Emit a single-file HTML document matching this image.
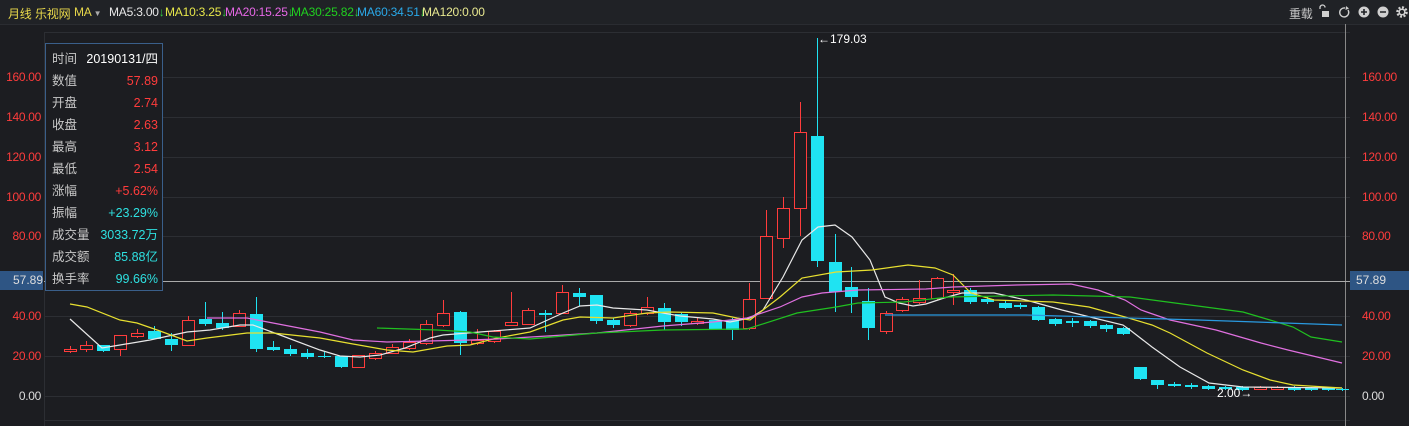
<!DOCTYPE html>
<html><head><meta charset="utf-8"><style>
body{margin:0;width:1409px;height:426px;background:#1c1d21;overflow:hidden;position:relative;font-family:"Liberation Sans","Noto Sans CJK SC",sans-serif;font-size:12px}
.top{position:absolute;left:0;top:0;width:1409px;height:24px;background:#202226;border-bottom:1px solid #2a2c31}
.top span{position:absolute;top:5px;font-size:12px;white-space:nowrap;letter-spacing:-0.2px}
.top b{font-weight:normal;color:#2ecc40}
.ax{position:absolute;color:#ff3c3c;font-size:12px;width:41px;text-align:right;letter-spacing:-0.3px}
.ar{position:absolute;color:#ff3c3c;font-size:12px;left:1362px;letter-spacing:-0.3px}
.tip{position:absolute;left:45px;top:43px;width:116px;height:246px;border:1px solid #3a5f8a;background:#1c1d21}
.tip div{position:absolute;left:0;width:112px;height:22px;line-height:22px;font-size:12.5px}
.tip b{font-weight:normal;position:absolute;left:6px;top:0;color:#c8c8c8}
.tip i{font-style:normal;position:absolute;right:0;top:0}
</style></head><body>
<div class="top">
<span style="left:8px;color:#e8d84a">月线</span>
<span style="left:35px;color:#e8d84a">乐视网</span>
<span style="left:74px;color:#e8d84a">MA<small style="font-size:8px;color:#aaa"> ▼</small></span>
<span style="left:109px;color:#e8e8e8">MA5:3.00<b>↓</b></span>
<span style="left:165px;color:#e8e84a">MA10:3.25<b>↓</b></span>
<span style="left:225px;color:#e868e8">MA20:15.25<b>↓</b></span>
<span style="left:291px;color:#20d020">MA30:25.82<b>↓</b></span>
<span style="left:357px;color:#2aa8e8">MA60:34.51<b>↓</b></span>
<span style="left:422px;color:#e8e890">MA120:0.00</span>
<span style="left:1289px;color:#c8c8c8">重载</span>
<svg style="position:absolute;left:1318px;top:4px" width="91" height="16">
<g fill="#d0d0d0" stroke="#d0d0d0">
<path d="M2 5 V3.5 a2.5 2.5 0 0 1 5 0" fill="none" stroke-width="1.3"/>
<rect x="4" y="7" width="7" height="6" stroke="none"/>
<path d="M27 4 a4.5 4.5 0 1 0 3 2" fill="none" stroke-width="1.4"/>
<path d="M28 2 l3 2.5 l-3.5 1.5z" stroke="none"/>
<circle cx="46" cy="8" r="5.5" stroke="none"/>
<circle cx="65" cy="8" r="5.5" stroke="none"/>
<circle cx="84" cy="8" r="4.5" fill="none" stroke-width="2.5" stroke-dasharray="2 1.5"/>
<circle cx="84" cy="8" r="2.8" fill="none" stroke-width="1.5"/>
</g>
<g stroke="#202226" stroke-width="1.6"><path d="M43 8h6M46 5v6M62 8h6"/></g>
</svg>
</div>
<svg width="1409" height="426" style="position:absolute;left:0;top:0;z-index:-0" id="s">
<g stroke="#2c2e33" stroke-width="1">
<line x1="44" y1="32.5" x2="1350" y2="32.5"/>
<line x1="44" y1="77.5" x2="1350" y2="77.5"/>
<line x1="44" y1="117.5" x2="1350" y2="117.5"/>
<line x1="44" y1="157.5" x2="1350" y2="157.5"/>
<line x1="44" y1="197.5" x2="1350" y2="197.5"/>
<line x1="44" y1="236.5" x2="1350" y2="236.5"/>
<line x1="44" y1="316.5" x2="1350" y2="316.5"/>
<line x1="44" y1="356.5" x2="1350" y2="356.5"/>
<line x1="44" y1="396.5" x2="1350" y2="396.5"/>
<line x1="44" y1="420.5" x2="1350" y2="420.5"/>
<line x1="44.5" y1="32" x2="44.5" y2="426"/>
</g>
<line x1="1345.5" y1="24" x2="1345.5" y2="426" stroke="#888" />
<line x1="44" y1="281.5" x2="1350" y2="281.5" stroke="#aaa"/>
<g id="c"></g>
<g fill="none" stroke-width="1.2" id="m"></g>
<text x="818" y="43" fill="#fff" font-size="12" font-family="Liberation Sans">←179.03</text>
<text x="1217" y="397" fill="#fff" font-size="12" font-family="Liberation Sans">2.00→</text>
</svg>
<div class="ax" style="left:0;top:70px">160.00</div>
<div class="ax" style="left:0;top:110px">140.00</div>
<div class="ax" style="left:0;top:150px">120.00</div>
<div class="ax" style="left:0;top:190px">100.00</div>
<div class="ax" style="left:0;top:229px">80.00</div>
<div class="ax" style="left:0;top:309px">40.00</div>
<div class="ax" style="left:0;top:349px">20.00</div>
<div class="ax" style="left:0;top:389px;color:#ddd">0.00</div>
<div style="position:absolute;left:0;top:271px;width:43px;height:19px;background:#2e5584;color:#ddd;text-align:right;line-height:19px;font-size:12px">57.89</div>
<div class="ar" style="top:70px">160.00</div>
<div class="ar" style="top:110px">140.00</div>
<div class="ar" style="top:150px">120.00</div>
<div class="ar" style="top:190px">100.00</div>
<div class="ar" style="top:229px">80.00</div>
<div class="ar" style="top:309px">40.00</div>
<div class="ar" style="top:349px">20.00</div>
<div class="ar" style="top:389px;color:#ddd">0.00</div>
<div style="position:absolute;left:1350px;top:271px;width:59px;height:19px;background:#2e5584;color:#ddd;line-height:19px;font-size:12px;padding-left:6px;box-sizing:border-box">57.89</div>
<div class="tip">
<div style="top:4px"><b>时间</b><i style="color:#fff">20190131/四</i></div>
<div style="top:26px"><b>数值</b><i style="color:#ff3c3c">57.89</i></div>
<div style="top:48px"><b>开盘</b><i style="color:#ff3c3c">2.74</i></div>
<div style="top:70px"><b>收盘</b><i style="color:#ff3c3c">2.63</i></div>
<div style="top:92px"><b>最高</b><i style="color:#ff3c3c">3.12</i></div>
<div style="top:114px"><b>最低</b><i style="color:#ff3c3c">2.54</i></div>
<div style="top:136px"><b>涨幅</b><i style="color:#ff3c3c">+5.62%</i></div>
<div style="top:158px"><b>振幅</b><i style="color:#2ee0e0">+23.29%</i></div>
<div style="top:180px"><b>成交量</b><i style="color:#2ee0e0">3033.72万</i></div>
<div style="top:202px"><b>成交额</b><i style="color:#2ee0e0">85.88亿</i></div>
<div style="top:224px"><b>换手率</b><i style="color:#2ee0e0">99.66%</i></div>
</div>
<script>
var C=[[70,349,351,346,353,1],[86,345,349,341,352,1],[103,345,351,345,352,0],[120,335,349,335,356,1],[137,333,336,329,338,1],[154,331,339,326,339,0],[171,339,345,333,351,0],[188,320,345,316,346,1],[205,319,324,302,326,0],[222,323,328,312,330,0],[239,313,326,310,327,1],[256,314,349,297,352,0],[273,347,350,341,351,0],[290,349,354,345,356,0],[307,353,357,349,359,0],[324,356,357,352,358,0],[341,356,367,356,368,0],[358,355,367,355,368,1],[375,353,358,351,360,1],[392,347,353,344,354,1],[409,342,348,339,350,1],[426,324,343,320,345,1],[443,313,325,300,327,1],[460,312,343,311,355,0],[477,340,343,329,345,1],[494,331,341,330,343,1],[511,322,325,292,326,1],[528,310,324,308,325,1],[545,313,315,310,332,0],[562,292,313,285,314,1],[579,293,297,288,306,0],[596,295,321,295,324,0],[613,320,325,318,328,0],[630,313,325,311,327,1],[647,307,313,297,315,1],[664,308,322,303,330,0],[681,314,322,313,326,0],[697,321,323,318,325,1],[715,320,329,319,330,0],[732,320,330,318,340,0],[749,299,328,283,330,1],[766,236,298,210,299,1],[783,208,238,197,248,1],[800,132,208,102,236,1],[817,136,261,38,267,0],[835,262,292,234,312,0],[851,287,297,267,313,0],[868,301,328,288,340,0],[886,313,331,311,334,1],[902,299,310,297,312,1],[919,298,302,280,304,1],[937,278,298,277,300,1],[953,290,292,274,305,1],[970,290,302,288,304,0],[987,299,302,297,304,0],[1005,303,308,301,309,0],[1020,305,307,303,309,0],[1038,307,320,306,321,0],[1055,319,324,318,326,0],[1072,321,323,318,327,0],[1090,321,326,320,328,0],[1106,325,329,324,332,0],[1123,328,334,327,335,0],[1140,367,379,367,380,0],[1157,380,385,380,389,0],[1174,384,386,382,387,0],[1191,385,387,383,389,0],[1208,386,389,385,390,0],[1225,387,389,386,390,0],[1242,387,390,386,391,0],[1260,387,389,386,390,1],[1277,387,389,386,390,1],[1294,387,390,386,391,0],[1311,388,390,387,391,0],[1328,388,390,387,391,0],[1342,389,390,388,391,0]];
var h='';C.forEach(function(c){var x=c[0],col=c[5]?'#ff3c3c':'#1fe3f2',bh=Math.max(c[2]-c[1],1);
h+='<line x1="'+(x+.5)+'" y1="'+c[3]+'" x2="'+(x+.5)+'" y2="'+c[4]+'" stroke="'+col+'"/>';
if(c[5])h+='<rect x="'+(x-5.5)+'" y="'+(c[1]+.5)+'" width="12" height="'+bh+'" fill="#1c1d21" stroke="'+col+'"/>';
else h+='<rect x="'+(x-6)+'" y="'+c[1]+'" width="13" height="'+bh+'" fill="'+col+'"/>';});
document.getElementById('c').innerHTML=h;
var M=[['#e8e8e8','70,319 102,348 120,345 150,340 187,332 210,330 240,325 253,325 280,335 320,350 340,356 360,357 380,355 405,348 430,338 443,335 480,332 530,328 563,313 580,306 597,305 613,308 647,310 663,313 680,316 713,319 730,322 750,318 763,310 783,277 802,240 818,227 835,225 852,237 870,260 885,297 899,303 913,306 926,304 944,298 962,293 994,293 1026,300 1062,310 1094,318 1123,325 1130,330 1152,347 1180,367 1209,383 1243,387 1342,388'],
['#e8e030','70,304 87,307 120,320 137,323 160,331 187,341 207,338 247,333 273,333 320,338 353,344 387,350 413,352 447,346 470,345 497,338 530,332 563,320 580,317 613,318 647,313 670,312 713,313 737,318 750,320 780,297 802,278 836,272 872,270 908,265 935,268 953,275 971,293 994,300 1053,302 1089,307 1125,317 1152,325 1170,333 1207,353 1243,370 1270,380 1293,385 1342,388'],
['#e070e0','207,318 247,318 273,323 320,332 353,340 387,342 470,340 497,339 597,333 663,326 713,322 747,318 780,307 802,297 822,293 858,290 926,289 953,287 1017,285 1071,284 1098,290 1125,300 1141,310 1170,320 1216,330 1261,343 1288,350 1342,363'],
['#20c020','377,328 437,330 470,332 493,337 530,339 597,333 663,330 747,329 797,313 836,307 858,303 904,302 949,297 1053,295 1130,297 1175,303 1243,312 1270,320 1293,327 1311,337 1342,342'],
['#2a9ae0','885,315 1026,315 1198,320 1342,325']];
var g='';M.forEach(function(m){g+='<polyline points="'+m[1]+'" stroke="'+m[0]+'"/>';});
document.getElementById('m').innerHTML=g;
</script>
</body></html>
